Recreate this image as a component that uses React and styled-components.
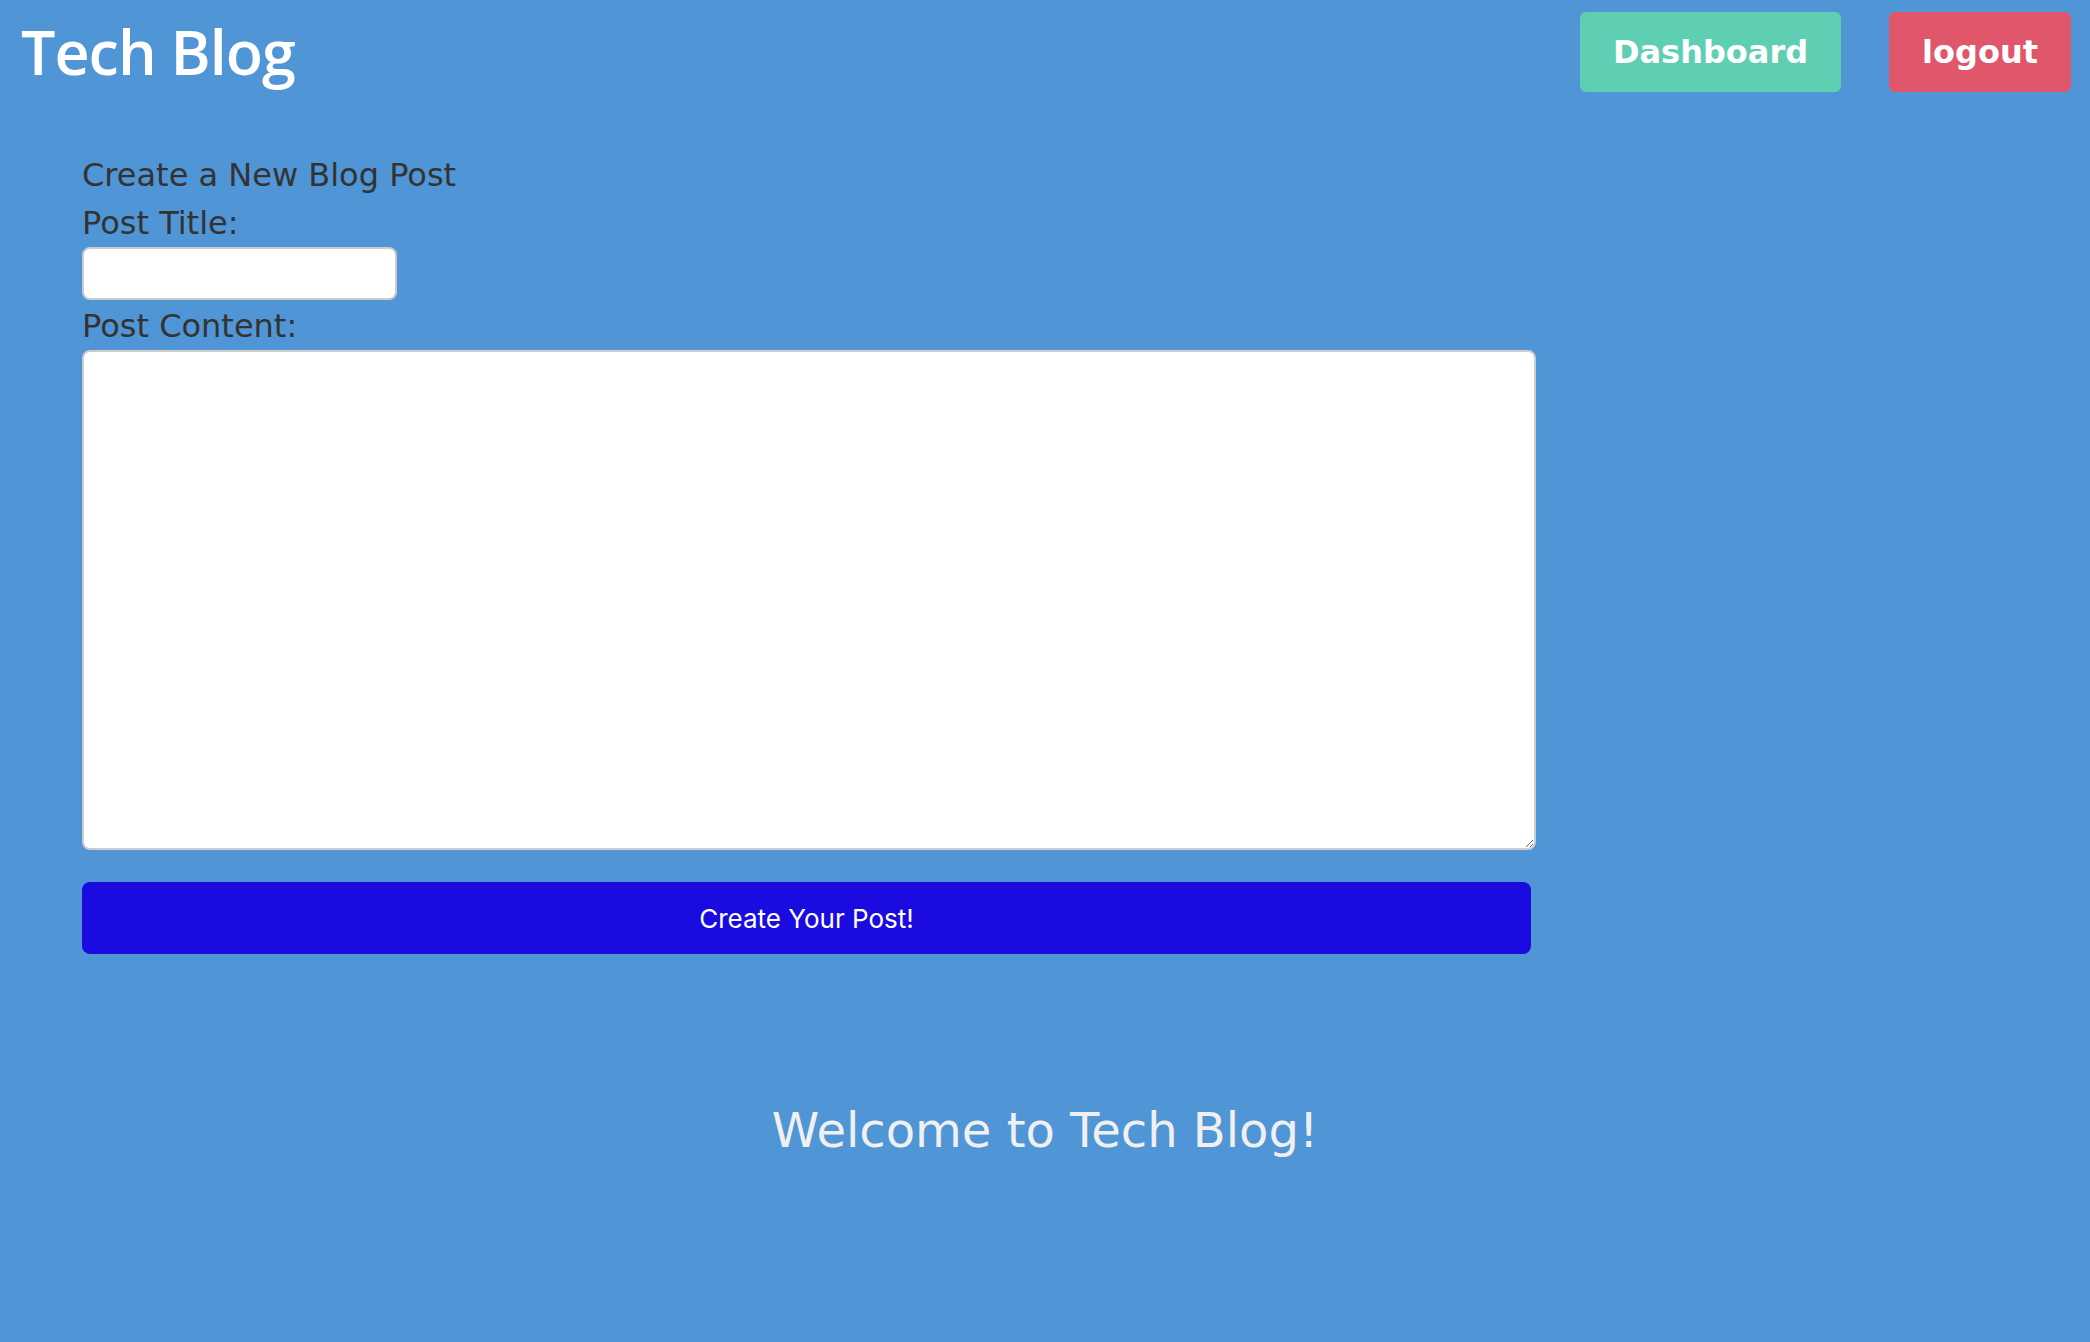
import styled, { createGlobalStyle } from 'styled-components'

const GlobalStyle = createGlobalStyle`
  * { box-sizing: border-box; }
  html, body {
    margin: 0;
    padding: 0;
    background: #5096d6;
    min-height: 100%;
  }
  body {
    font-family: "DejaVu Sans", Verdana, sans-serif;
    font-size: 32px;
    line-height: 1.5;
    color: #333;
  }
`

const Page = styled.div`
  background: #5096d6;
  padding-bottom: 120px;
`

const Header = styled.header`
  display: flex;
  align-items: center;
  justify-content: space-between;
  padding: 12px 19px 0 21px;
`

const Logo = styled.h1`
  margin: 0;
  font-family: "Open Sans", "Noto Sans", sans-serif;
  font-weight: 600;
  font-size: 61px;
  letter-spacing: -1px;
  line-height: 80px;
  color: #fff;
`

const Nav = styled.nav`
  display: flex;
  gap: 48px;
`

const NavButton = styled.a`
  display: flex;
  align-items: center;
  height: 80px;
  padding: 0 33px;
  border-radius: 6px;
  background: ${p => p.$bg};
  color: #fff;
  font-family: "DejaVu Sans", Verdana, sans-serif;
  font-weight: bold;
  font-size: 32px;
  text-decoration: none;
`

const Main = styled.main`
  padding: 59px 0 0 82px;
`

const Form = styled.form`
  width: 1454px;
`

const Line = styled.div`
  height: 48px;
`

const TitleInput = styled.input`
  display: block;
  width: 315px;
  height: 53px;
  margin-bottom: 2px;
  border: 2px solid #ccc;
  border-radius: 8px;
  background: #fff;
  font-size: 24px;
`

const ContentArea = styled.textarea`
  display: block;
  width: 1454px;
  height: 500px;
  border: 2px solid #ccc;
  border-radius: 8px;
  background: #fff;
  font-size: 24px;
`

const Submit = styled.button`
  display: block;
  width: 1449px;
  height: 72px;
  margin-top: 32px;
  border: none;
  border-radius: 8px;
  background: #1a0ce0;
  color: #fff;
  font-family: Inter, sans-serif;
  font-size: 26px;
  cursor: pointer;
`

const Welcome = styled.footer`
  margin-top: 140px;
  text-align: center;
  font-size: 48px;
  line-height: 72px;
  color: #f0f0f0;
`

export default function App() {
  return (
    <Page>
      <GlobalStyle />
      <Header>
        <Logo>Tech Blog</Logo>
        <Nav>
          <NavButton $bg="#5fcfb3" href="#">Dashboard</NavButton>
          <NavButton $bg="#e0566b" href="#">logout</NavButton>
        </Nav>
      </Header>
      <Main>
        <Form onSubmit={e => e.preventDefault()}>
          <Line>Create a New Blog Post</Line>
          <Line>Post Title:</Line>
          <TitleInput type="text" />
          <Line>Post Content:</Line>
          <ContentArea />
          <Submit type="submit">Create Your Post!</Submit>
        </Form>
      </Main>
      <Welcome>Welcome to Tech Blog!</Welcome>
    </Page>
  )
}
